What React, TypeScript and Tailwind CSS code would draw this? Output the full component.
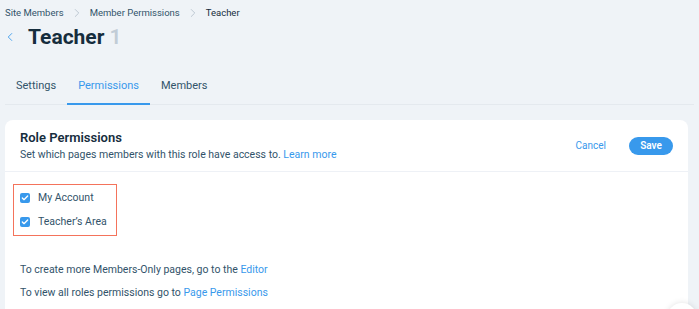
import { ChevronLeft, ChevronRight, Check } from 'lucide-react';

const font = { fontFamily: 'Roboto, "Noto Sans", sans-serif' };

function Crumb({ label, last }: { label: string; last?: boolean }) {
  return (
    <div className="flex items-center">
      <span className={last ? 'text-[#162d3d]' : 'text-[#32536a]'}>{label}</span>
      {!last && <ChevronRight className="w-3.5 h-3.5 text-[#b6c1cd] mx-[6px]" strokeWidth={1.5} />}
    </div>
  );
}

function PermRow({ label }: { label: string }) {
  return (
    <div className="flex items-center gap-[8px] h-[24px] whitespace-nowrap">
      <span className="w-[10px] h-[10px] rounded-[2px] bg-[#3899ec] flex items-center justify-center">
        <Check className="w-[8px] h-[8px] text-white" strokeWidth={4} />
      </span>
      <span className="text-[10.5px] text-[#32536a]">{label}</span>
    </div>
  );
}

export default function App() {
  return (
    <div className="w-[699px] h-[309px] bg-[#eff3f7] overflow-hidden relative" style={font}>
      <div className="flex items-center h-[26px] pl-[5px] text-[9.5px]">
        <Crumb label="Site Members" />
        <Crumb label="Member Permissions" />
        <Crumb label="Teacher" last />
      </div>

      <div className="flex items-center h-[22px]">
        <ChevronLeft className="w-[14px] h-[14px] text-[#3899ec] ml-[3px]" strokeWidth={1.5} />
        <h1 className="ml-[11px] text-[21px] font-bold text-[#162d3d] leading-none">
          Teacher <span className="text-[#c1ccd6] font-semibold">1</span>
        </h1>
      </div>

      <div className="mt-[20px] ml-[5px] mr-[5px] flex items-end h-[37px] border-b border-[#e4e9ee] text-[11px]">
        <div className="pl-[11px] pr-[11px] h-full flex items-center text-[#32536a]">Settings</div>
        <div className="px-[11px] h-full flex items-center text-[#3899ec] border-b-2 border-[#3899ec] -mb-px">
          Permissions
        </div>
        <div className="px-[11px] h-full flex items-center text-[#32536a]">Members</div>
      </div>

      <div className="mt-[15px] ml-[5px] w-[683px] h-[200px] bg-white rounded-t-[8px]">
        <div className="flex items-center justify-between h-[52px] px-[15px] border-b border-[#eef1f6]">
          <div>
            <div className="text-[13px] font-semibold text-[#162d3d] leading-[18px]">Role Permissions</div>
            <div className="text-[10.5px] text-[#32536a] leading-[16px]">
              Set which pages members with this role have access to.{' '}
              <span className="text-[#3899ec]">Learn more</span>
            </div>
          </div>
          <div className="flex items-center gap-[23px]">
            <span className="text-[10px] text-[#3899ec]">Cancel</span>
            <button className="h-[18px] w-[44px] rounded-full bg-[#3899ec] text-white text-[10px] font-semibold">
              Save
            </button>
          </div>
        </div>

        <div className="mt-[12px] ml-[8px] w-[104px] border-[1.5px] border-[#f4735b] pl-[6px] py-[1px]">
          <PermRow label="My Account" />
          <PermRow label="Teacher’s Area" />
        </div>

        <div className="mt-[26px] pl-[15px] text-[10.5px] text-[#32536a] flex flex-col gap-[7px]">
          <div>
            To create more Members-Only pages, go to the <span className="text-[#3899ec]">Editor</span>
          </div>
          <div>
            To view all roles permissions go to <span className="text-[#3899ec]">Page Permissions</span>
          </div>
        </div>
      </div>

      <div className="absolute right-[2px] bottom-[-24px] w-[30px] h-[30px] rounded-full bg-white shadow-[0_0_6px_rgba(0,0,0,0.12)]" />
    </div>
  );
}
